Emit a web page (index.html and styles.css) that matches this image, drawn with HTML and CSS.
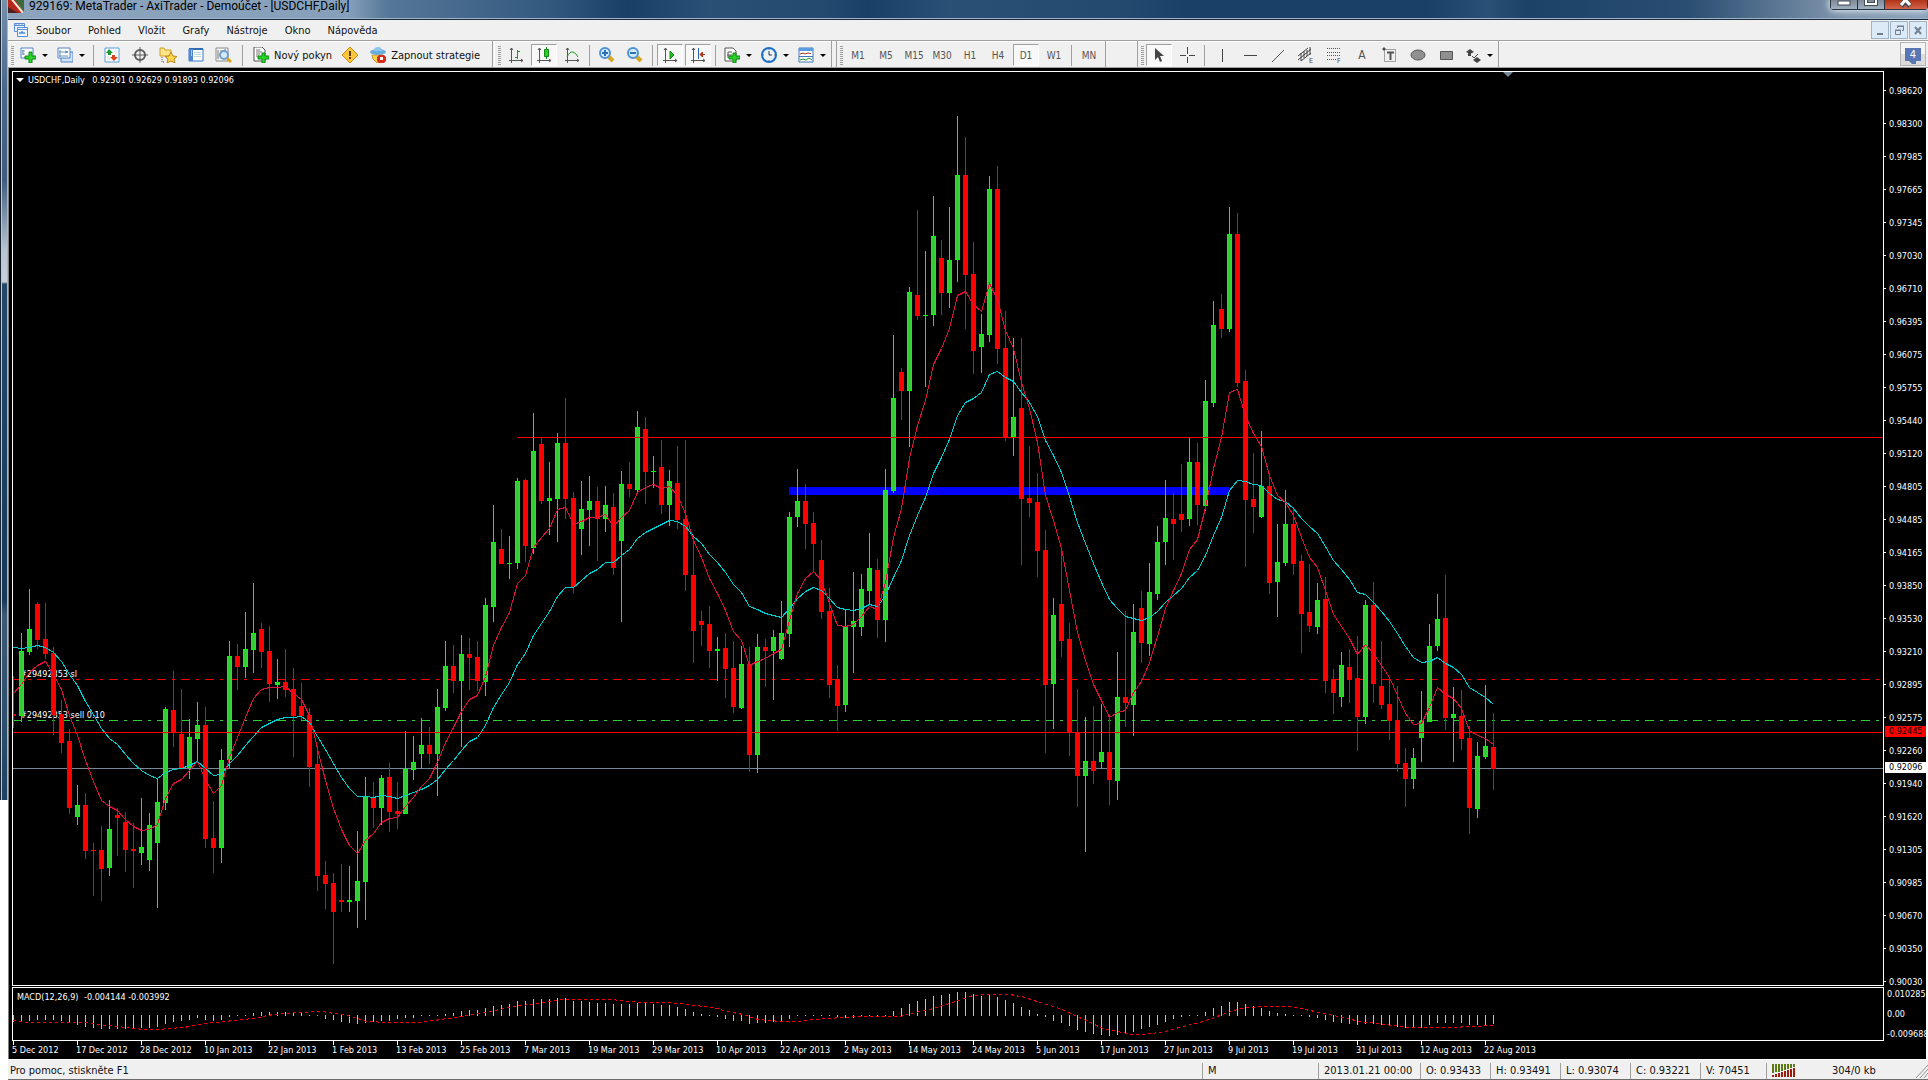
FILE: index.html
```html
<!DOCTYPE html>
<html lang="cs">
<head>
    <meta charset="UTF-8">
    <meta name="viewport" content="width=device-width, initial-scale=1.0">
    <title>929169: MetaTrader - AxiTrader - Demoúčet - [USDCHF,Daily]</title>
    <link rel="stylesheet" href="styles.css">
</head>
<body>
    <div class="frame-left"></div>
    <div class="window">
        <header class="titlebar">
            <svg class="logo" width="16" height="16" viewBox="0 0 16 16"><path d="M0 0h6l10 16H3L0 12z" fill="#b5281c"/><path d="M5 0h11v15z" fill="#3c6b3a"/><path d="M2 0l13 16" stroke="#f4e9d8" stroke-width="2"/><path d="M0 10v6h10z" fill="#4a2020"/></svg>
            <h1>929169: MetaTrader - AxiTrader - Demoúčet - [USDCHF,Daily]</h1>
            <div class="window-buttons">
                <button type="button" aria-label="Minimalizovat"><svg width="26" height="9"><rect x="7" y="1" width="12" height="4" fill="#fff" stroke="#444b55"/></svg></button>
                <button type="button" aria-label="Maximalizovat"><svg width="26" height="9"><path d="M8-4h10v8H8z" fill="none" stroke="#444b55" stroke-width="4"/><path d="M8-4h10v8H8z" fill="none" stroke="#fff" stroke-width="2"/></svg></button>
                <button type="button" class="close" aria-label="Zavřít"><svg width="42" height="9"><path d="M16 6l8-9M25 6l-8-9" stroke="#444b55" stroke-width="5"/><path d="M16 5l8-9M25 5l-8-9" stroke="#fff" stroke-width="3"/></svg></button>
            </div>
        </header>

        <nav class="menu">
            <svg width="16" height="16" viewBox="0 0 16 16" fill="#eef5ff" stroke="#5a90d8"><path d="M1.500 1.500h10v8h-10z"/><path d="M1 3.500h11M3 1v2M6 1v2M9 1v2"/><path d="M4.500 5.500h10v9h-10z"/><path d="M4 7.500h11" /><path d="M6 12l1-2 1 2 1-3 1 3 1-2 1 2" fill="none"/></svg>
            <a href="#">Soubor</a>
            <a href="#">Pohled</a>
            <a href="#">Vložit</a>
            <a href="#">Grafy</a>
            <a href="#">Nástroje</a>
            <a href="#">Okno</a>
            <a href="#">Nápověda</a>
            <div class="mdi-buttons">
                <button type="button" aria-label="Minimalizovat graf"><svg width="12" height="12"><path d="M3 9h6v2H3z" fill="#6f8194"/></svg></button>
                <button type="button" aria-label="Obnovit graf"><svg width="12" height="12" fill="none" stroke="#6f8194"><path d="M4.500 4V2.500h6v4H9M4 2h7M2.500 6.500h5v4h-5zM2 6h6"/></svg></button>
                <button type="button" aria-label="Zavřít graf"><svg width="12" height="12"><path d="M3 3l6 7M9 3l-6 7" stroke="#6f8194" stroke-width="2"/></svg></button>
            </div>
        </nav>

        <div class="toolbar">
            <div class="group group-main">
                <span class="grip"></span>
                <button type="button" class="drop" aria-label="Nový graf"><svg width="16" height="16" viewBox="0 0 16 16"><path d="M1 1h12v10H1z" fill="#fff" stroke="#4d86c6"/><path d="M3 3v5M2 4h3M2 7h3" stroke="#6d8fb5"/><path d="M9 5h3v4h4v3h-4v4H9v-4H5V9h4z" fill="#2bd32b" stroke="#0a8a14"/></svg></button>
                <button type="button" class="drop" aria-label="Profily"><svg width="16" height="16" viewBox="0 0 16 16"><path d="M4 5h12v10H4z" fill="#cfe2f7" stroke="#4d86c6"/><path d="M1 1h12v10H1z" fill="#fff" stroke="#4d86c6"/><path d="M3 3v7M2 5h9M2 9h9M8 4l3 1-3 1" stroke="#6d8fb5" fill="none"/></svg></button>
                <span class="sep"></span>
                <button type="button" aria-label="Sledování trhu"><svg width="16" height="16" viewBox="0 0 16 16"><path d="M1 1h14v14H1z" fill="#fff" stroke="#5a9bdc"/><path d="M5 2l4 4H7v2H4V6H2z" fill="#179a2c"/><path d="M10 14l-4-4h2V8h3v2h3z" fill="#e0401c"/><path d="M10 4h3M11 6h2M3 10h2M3 12h3" stroke="#c9d8e8"/></svg></button>
                <button type="button" aria-label="Datové okno"><svg width="16" height="16" viewBox="0 0 16 16" fill="none" stroke="#5c5c5c"><circle cx="8" cy="8" r="5" stroke-width="2"/><path d="M8 0v16M0 8h16"/></svg></button>
                <button type="button" aria-label="Navigátor"><svg width="18" height="16" viewBox="0 0 18 16"><path d="M1 1h4l1 2h6v6H1z" fill="#ffe48a" stroke="#d2a024"/><path d="M3 10v5h3" fill="none" stroke="#555" stroke-dasharray="1 1"/><path d="M12 5l2 4 4 .5-3 2.500 1 4-4-2-4 2 1-4-3-2.500 4-.5z" fill="#ffd54a" stroke="#b8851b"/></svg></button>
                <button type="button" aria-label="Terminál"><svg width="16" height="16" viewBox="0 0 16 16"><path d="M1 2h14v12H1z" fill="#fff" stroke="#3b7cc4"/><path d="M1 1h14v2H1z" fill="#2e6db4"/><path d="M1 2h4v12H1z" fill="#4d86d6"/><path d="M3 4h1M3 6h1M3 8h1" stroke="#fff"/><path d="M6 5.500h7M6 7.500h7M6 9.500h7" stroke="#c2d6ea"/></svg></button>
                <button type="button" aria-label="Tester strategií"><svg width="18" height="16" viewBox="0 0 18 16"><path d="M1 1h12v13H1z" fill="#f6f6f6" stroke="#8a8a8a"/><path d="M3 3v9M6 3v4M10 2v3" stroke="#777"/><path d="M12 11l4 4" stroke="#d8a520" stroke-width="3"/><circle cx="9" cy="8" r="4" fill="#cfe6fa" fill-opacity=".8" stroke="#6f9fd0" stroke-width="2"/></svg></button>
                <span class="sep"></span>
                <button type="button" class="wide"><svg width="16" height="16" viewBox="0 0 16 16"><path d="M1 0h8l3 3v11H1z" fill="#fff" stroke="#555"/><path d="M3 3h4M3 5h6M3 7h4M3 9h3" stroke="#777"/><path d="M9 6h3v3h4v3h-4v4H9v-4H5V9h4z" fill="#2bd32b" stroke="#0a8a14"/></svg>Nový pokyn</button>
                <button type="button" aria-label="MetaEditor"><svg width="16" height="16" viewBox="0 0 16 16"><path d="M8 0l8 8-8 8-8-8z" fill="#fcc63a" stroke="#c88a10" stroke-linejoin="round"/><path d="M8 4v5M8 10v2" stroke="#5e3c00" stroke-width="2"/></svg></button>
                <button type="button" class="wide"><svg width="16" height="16" viewBox="0 0 16 16"><path d="M2 8h11l-1 6-5 2-4-4z" fill="#f7cf4a" stroke="#c8962a"/><ellipse cx="8" cy="5" rx="8" ry="3" fill="#6aaede"/><path d="M4 4q0-4 4-4t4 4" fill="#8cc6ee"/><path d="M9 8h5l2 2v4l-2 2H9l-2-2v-4z" fill="#d92a1c"/><path d="M10 10h3v3h-3z" fill="#fff"/></svg>Zapnout strategie</button>
            </div>

            <div class="group group-charts">
                <span class="grip"></span>
                <button type="button" aria-label="Sloupcový graf"><svg width="16" height="16" viewBox="0 0 16 16" fill="none" stroke="#555"><path d="M3.500 1v15M1 13.500h14M2 3l1.500-2L5 3M13 12l2 1.500-2 1.500"/><path d="M9.500 3v9M7 10.500h2M10 4.500h2" stroke="#1f9a1f"/></svg></button>
                <button type="button" class="pressed" aria-label="Svíčkový graf"><svg width="16" height="16" viewBox="0 0 16 16" fill="none" stroke="#555"><path d="M3.500 1v15M1 13.500h14M2 3l1.500-2L5 3M13 12l2 1.500-2 1.500"/><path d="M10.500 0v12" stroke="#138a13"/><path d="M8.500 2.500h4v7h-4z" fill="#25d025" stroke="#138a13"/></svg></button>
                <button type="button" aria-label="Čárový graf"><svg width="16" height="16" viewBox="0 0 16 16" fill="none" stroke="#555"><path d="M3.500 1v15M1 13.500h14M2 3l1.500-2L5 3M13 12l2 1.500-2 1.500"/><path d="M3 10q3-6 6-5t5 5" stroke="#1f9a1f"/></svg></button>
                <span class="sep"></span>
                <button type="button" aria-label="Přiblížit"><svg width="16" height="16" viewBox="0 0 16 16"><path d="M10 10l4 4" stroke="#d8a520" stroke-width="4"/><circle cx="6" cy="6" r="5" fill="#d5ecfc" stroke="#4e92d4" stroke-width="2"/><path d="M3 6h6M6 3v6" stroke="#2c6fb4" stroke-width="2"/></svg></button>
                <button type="button" aria-label="Oddálit"><svg width="16" height="16" viewBox="0 0 16 16"><path d="M10 10l4 4" stroke="#d8a520" stroke-width="4"/><circle cx="6" cy="6" r="5" fill="#d5ecfc" stroke="#4e92d4" stroke-width="2"/><path d="M3 6h6" stroke="#2c6fb4" stroke-width="2"/></svg></button>
                <span class="sep"></span>
                <button type="button" class="pressed" aria-label="Automatický posun"><svg width="16" height="16" viewBox="0 0 16 16" fill="none" stroke="#555"><path d="M3.500 1v15M1 13.500h14M2 3l1.500-2L5 3M13 12l2 1.500-2 1.500"/><path d="M8 4l4 4-4 4z" fill="#25c025" stroke="#138a13"/></svg></button>
                <button type="button" class="pressed" aria-label="Odsazení grafu"><svg width="16" height="16" viewBox="0 0 16 16" fill="none" stroke="#555"><path d="M3.500 1v15M1 13.500h14M2 3l1.500-2L5 3M13 12l2 1.500-2 1.500"/><path d="M8.500 1v11" stroke="#2864b0"/><path d="M10 7.500h5M12.500 5L10 7.500l2.500 2.500z" stroke="#b83010" fill="#b83010"/></svg></button>
                <span class="sep"></span>
                <button type="button" class="drop" aria-label="Indikátory"><svg width="16" height="16" viewBox="0 0 16 16"><path d="M1 1h8l3 3v10H1z" fill="#fff" stroke="#555"/><path d="M4 11V5h4M3 8h5" stroke="#555" fill="none"/><path d="M9 6h3v3h4v3h-4v4H9v-4H5V9h4z" fill="#2bd32b" stroke="#0a8a14"/></svg></button>
                <button type="button" class="drop" aria-label="Periody"><svg width="16" height="16" viewBox="0 0 16 16"><circle cx="8" cy="8" r="7" fill="#eaf3fc" stroke="#1f6fc4" stroke-width="2"/><path d="M8 4v4h3" fill="none" stroke="#333"/><path d="M8 2v1M8 13v1M2 8h1M13 8h1" stroke="#667"/></svg></button>
                <button type="button" class="drop" aria-label="Šablony"><svg width="16" height="16" viewBox="0 0 16 16"><path d="M1 1h14v14H1z" fill="#fff" stroke="#3d78bd"/><path d="M1 1h14v3H1z" fill="#5b9be0"/><path d="M1 9.500h14" stroke="#3d78bd"/><path d="M2 7l3-1 2 1 3-1 3 .5" stroke="#a83018" fill="none"/><path d="M2 13l3-1 3 1 3-2 3 2" stroke="#1f9a1f" fill="none"/></svg></button>
            </div>

            <div class="group group-periods">
                <span class="grip"></span>
                <button type="button">M1</button>
                <button type="button">M5</button>
                <button type="button">M15</button>
                <button type="button">M30</button>
                <button type="button">H1</button>
                <button type="button">H4</button>
                <button type="button" class="pressed">D1</button>
                <button type="button">W1</button>
                <span class="sep"></span>
                <button type="button">MN</button>
            </div>

            <div class="group group-draw">
                <span class="grip"></span>
                <button type="button" class="pressed" aria-label="Kurzor"><svg width="16" height="16"><path d="M4 1v12l3-3 2 5 2-1-2-5h4z" fill="#444"/></svg></button>
                <button type="button" aria-label="Nitkový kříž"><svg width="16" height="16"><path d="M8.500 0v7M8.500 10v6M1 8.500h6M10 8.500h6" stroke="#444"/></svg></button>
                <span class="sep"></span>
                <button type="button" aria-label="Svislá čára"><svg width="16" height="16"><path d="M8.500 2v13" stroke="#444"/></svg></button>
                <button type="button" aria-label="Vodorovná čára"><svg width="16" height="16"><path d="M2 8.500h13" stroke="#444"/></svg></button>
                <button type="button" aria-label="Trendová čára"><svg width="16" height="16"><path d="M2 15L14 3" stroke="#555"/></svg></button>
                <button type="button" aria-label="Kanál"><svg width="16" height="17" fill="none" stroke="#444"><path d="M0 9l10-8M0 13L13 2M3 14l10-8M3 6v8M6 4v7M9 3v6M12 0v8"/><text x="11" y="16">E</text></svg></button>
                <button type="button" aria-label="Fibonacci"><svg width="16" height="17" fill="none" stroke="#555"><path d="M1 1.500h14M1 5.500h14M1 8.500h14M1 12.500h9" stroke-dasharray="1 1"/><text x="11" y="16">F</text></svg></button>
                <button type="button" class="letter">A</button>
                <button type="button" aria-label="Popisek"><svg width="16" height="16" fill="none" stroke="#555"><path d="M2.500 2.500h11v12h-11z" stroke-dasharray="1 1"/><path d="M5 5.500h7M8.500 5v8" stroke-width="2"/><path d="M1 1h2v2H1z" fill="#444"/></svg></button>
                <button type="button" aria-label="Elipsa"><svg width="16" height="16"><ellipse cx="8" cy="8" rx="7" ry="5" fill="#909090" stroke="#555"/></svg></button>
                <button type="button" aria-label="Obdélník"><svg width="16" height="16"><path d="M2.500 4.500h12v8h-12z" fill="#909090" stroke="#555"/></svg></button>
                <button type="button" class="drop" aria-label="Šipky"><svg width="16" height="16" fill="#444"><path d="M5 2l4 3-4 2-4-2zM3 6h3v3H3zM12 10l4 3-4 3-4-3z"/><path d="M7 9l2 2 4-4" fill="none" stroke="#444"/></svg></button>
            </div>

            <button type="button" class="chat" aria-label="Zprávy: 4"><span>4</span></button>
        </div>

        <main class="chart">
            <section class="pane price-pane">
                <svg id="price-plot" class="plot"></svg>
                <p class="pane-label"><i class="triangle"></i>USDCHF,Daily <span>0.92301 0.92629 0.91893 0.92096</span></p>
                <i class="triangle shift-mark"></i>
            </section>
            <div class="scale price-scale" id="price-scale">
                <b class="tag tag-ask">0.92445</b>
                <b class="tag tag-bid">0.92096</b>
            </div>
            <section class="pane macd-pane">
                <svg id="macd-plot" class="plot"></svg>
                <p class="pane-label">MACD(12,26,9) <span>-0.004144 -0.003992</span></p>
            </section>
            <div class="scale macd-scale"><span>0.010285</span><span>0.00</span><span>-0.009688</span></div>
            <div class="dates" id="dates"></div>
        </main>

        <footer class="status">
            <span class="help">Pro pomoc, stiskněte F1</span>
            <span class="cell profile">M</span>
            <span class="cell time">2013.01.21 00:00</span>
            <span class="cell">O: 0.93433</span>
            <span class="cell">H: 0.93491</span>
            <span class="cell">L: 0.93074</span>
            <span class="cell">C: 0.93221</span>
            <span class="cell volume">V: 70451</span>
            <span class="cell traffic">
                <svg width="24" height="13"><path d="M1 0v9M4 0v8M7 0v8M10 0v7M13 0v6M16 0v5M19 0v4M22 0v3" stroke="#5c7a14" stroke-width="2"/><path d="M1 11v2M4 10v3M7 9v4M10 8v5M13 7v6M16 6v7M19 5v8M22 4v9" stroke="#9c1c10" stroke-width="2"/></svg>
                304/0 kb
            </span>
            <svg class="resize" width="12" height="14"><path d="M0 14L12 1M4 14l8-9M8 14l4-5" stroke="#909090" stroke-width="1"/></svg>
        </footer>
    </div>
    <script src="chart.js"></script>
</body>
</html>
```
FILE: styles.css
```css
* {
    box-sizing: border-box;
}
body {
    margin: 0;
    min-height: 100vh;
    display: flex;
    background-color: #fff;
    color: #111;
    font-family: "DejaVu Sans Condensed", "Noto Sans", sans-serif;
    font-size: 11px;
    overflow: hidden;
}
button {
    font: inherit;
    color: inherit;
    background: none;
    border: 0;
    margin: 0;
    padding: 0;
    cursor: pointer;
}
svg {
    display: block;
    flex: none;
}

/* okno */
.frame-left {
    flex: 0 0 8px;
    height: 800px;
    border-left: 1px solid #1b2634;
    border-right: 1px solid #a9b8c6;
    box-shadow: inset 1px 0 #b9c9d8;
    background: linear-gradient(#7590ad 0, #48688c 90px, #3e5d80 180px, #b9c5d3 250px, #c8d0da 282px, #24486a 284px, #1d4468 400px, #16395a 600px, #3c5a74 615px, #2c506e 720px, #1d4164 800px);
}
.window {
    flex: 1;
    min-width: 0;
    height: 100vh;
    display: flex;
    flex-direction: column;
    border-bottom: 1px solid #6c6c6c;
}
.titlebar {
    flex: 0 0 20px;
    display: flex;
    align-items: flex-start;
    border-bottom: 1px solid #1c2a3c;
    box-shadow: inset 0 -1px #9db4c8;
    background: linear-gradient(90deg, #8ca4bd 0, #86a0bb 340px, #557799 380px, #34597f 540px, #1a3f66 620px, #2a5076 700px, #24496f 820px, #1a3f66 860px, #2a5076 940px, #24496f 1120px, #1a4068 1180px, #1a4068 1420px, #2a5076 1480px, #1c4268 1520px, #2a4d72 1680px, #8298ae 1840px, #8ba2b8 100%);
}
.titlebar .logo {
    margin-top: -3px;
}
.titlebar h1 {
    flex: 1;
    margin: -3px 0 0 5px;
    font: 12px/18px Roboto, "Noto Sans", sans-serif;
    color: #000;
}
.window-buttons {
    display: flex;
    border: 1px solid #2a3340;
    border-top: 0;
    border-radius: 0 0 4px 4px;
    box-shadow: 0 0 6px 1px #e4ecf4;
}
.window-buttons button {
    height: 9px;
    overflow: hidden;
    border-right: 1px solid #2a3340;
    background: linear-gradient(#7d8a98, #9fb0c0);
}
.window-buttons .close {
    background: linear-gradient(#b03418, #d4644c);
    border-right: 0;
}
.menu {
    flex: 0 0 20px;
    display: flex;
    align-items: center;
    gap: 17px;
    padding-left: 5px;
    background-color: #f0f0f0;
}
.menu svg {
    margin-right: -10px;
}
.menu a {
    color: #111;
    text-decoration: none;
}
.mdi-buttons {
    display: flex;
    gap: 1px;
    margin: 0 1px 0 auto;
}
.mdi-buttons button {
    width: 18px;
    height: 18px;
    padding: 2px;
    border: 1px solid #9fb2c6;
    background-color: #dce9f6;
}
.mdi-buttons svg {
    margin: 0;
}

/* nástrojová lišta */
.toolbar {
    flex: 0 0 28px;
    display: flex;
    background-color: #f0f0f0;
    border-top: 1px solid #a0a0a0;
    border-bottom: 1px solid #a0a0a0;
    box-shadow: inset 0 1px #fff;
}
.group {
    flex: none;
    display: flex;
    align-items: center;
    padding-top: 2px;
    border-right: 1px solid #a0a0a0;
}
.group-main {
    width: 485px;
}
.group-charts {
    width: 338px;
    border-left: 1px solid #fff;
    margin-left: 1px;
}
.group-periods {
    width: 270px;
    margin-left: 4px;
    border-left: 1px solid #a0a0a0;
    color: #555;
    font-size: 10px;
}
.group-draw {
    width: 362px;
    margin-left: 31px;
    border-left: 1px solid #a0a0a0;
}
.grip {
    width: 3px;
    height: 19px;
    margin: 0 1px 0 3px;
    background: repeating-linear-gradient(#a0a0a0 0 1px, #f0f0f0 1px 2px);
}
.sep {
    width: 1px;
    height: 21px;
    margin: 0 3px;
    background-color: #a0a0a0;
}
.group-main .sep {
    margin: 0 4px;
}
.group button {
    flex: 0 0 28px;
    height: 22px;
    display: flex;
    align-items: center;
    justify-content: center;
}
.group .drop {
    flex-basis: 37px;
    justify-content: flex-start;
    gap: 6px;
    padding-left: 5px;
}
.drop::after {
    content: "";
    border: 3px solid transparent;
    border-top-color: #000;
    border-bottom: 0;
}
.group .wide {
    flex-basis: auto;
    gap: 5px;
    padding: 0 4px 0 6px;
    white-space: nowrap;
}
.group .pressed {
    flex-basis: 26px;
    margin: 0 1px;
    border: 1px solid #fff;
    border-top-color: #a0a0a0;
    border-left-color: #a0a0a0;
    background-color: #f8f8f8;
}
.group .letter {
    font-size: 12px;
    color: #555;
}
.group text {
    font-size: 7px;
    fill: #444;
    stroke: none;
}
.chat {
    width: 26px;
    height: 24px;
    margin: 1px 2px 0 auto;
    padding: 3px 4px;
    border: 1px solid #b4b4b4;
    background: linear-gradient(#f4f4f4 50%, #dcdcdc 50%);
}
.chat span {
    display: block;
    height: 13px;
    background-color: #5877b4;
    color: #fff;
    font-size: 11px;
    line-height: 13px;
}
.chat span::after {
    content: "";
    display: block;
    width: 4px;
    margin-left: 4px;
    border-top: 3px solid #5877b4;
    border-left: 3px solid transparent;
}

/* graf */
.chart {
    flex: 1;
    min-height: 0;
    display: grid;
    grid-template-columns: 1fr 42px;
    grid-template-rows: minmax(0, 1fr) 54px 17px;
    row-gap: 1px;
    margin-right: 2px;
    padding: 3px 0 0 3px;
    border-left: 1px solid #808080;
    background-color: #000;
    color: #fff;
    font-size: 9px;
    line-height: 12px;
}
.pane {
    position: relative;
    min-height: 0;
    overflow: hidden;
    border: 1px solid #fff;
}
.plot {
    width: 100%;
    height: 100%;
    shape-rendering: crispEdges;
}
.plot text {
    font-size: 9px;
    fill: #fff;
}
.pane-label {
    position: absolute;
    top: 2px;
    left: 3px;
    margin: 0;
}
.pane-label span {
    margin-left: 5px;
}
.macd-pane .pane-label {
    top: 3px;
    left: 4px;
}
.macd-pane .pane-label span {
    margin-left: 3px;
}
.triangle {
    display: inline-block;
    border: 4px solid transparent;
    border-top-color: #fff;
    border-bottom: 0;
    margin-right: 4px;
    vertical-align: 1px;
}
.shift-mark {
    position: absolute;
    top: 0;
    left: 1490px;
    border-width: 5px;
    border-bottom: 0;
    border-top-color: #778899;
}
.scale {
    position: relative;
    min-height: 0;
}
.price-scale {
    padding-top: 3px;
}
.price-scale span {
    display: flex;
    align-items: center;
    gap: 3px;
    height: 33px;
}
.price-scale span::before {
    content: "";
    width: 2px;
    height: 1px;
    background-color: #fff;
}
.tag {
    position: absolute;
    left: 1px;
    right: 0;
    padding-left: 4px;
    font-weight: normal;
    line-height: 11px;
    color: #000;
}
.tag-ask {
    top: 655px;
    background-color: #f00;
}
.tag-bid {
    top: 691px;
    background-color: #fff;
}
.macd-scale {
    display: flex;
    flex-direction: column;
    justify-content: space-between;
    padding: 1px 0 1px 3px;
}
.dates {
    grid-column: 1 / 3;
    display: flex;
    margin-top: -1px;
}
.dates span {
    flex: 0 0 64px;
    padding-top: 3px;
    background: linear-gradient(#fff, #fff) 1px 0 / 1px 4px no-repeat;
    white-space: nowrap;
}

/* stavový řádek */
.status {
    flex: 0 0 20px;
    display: flex;
    align-items: center;
    padding-top: 2px;
    border-top: 1px solid #fff;
    background-color: #f0f0f0;
}
.help {
    flex: 1;
    padding-left: 2px;
}
.cell {
    flex: 0 0 70px;
    height: 16px;
    padding-left: 5px;
    line-height: 16px;
    border-left: 1px solid #a0a0a0;
    white-space: nowrap;
}
.profile {
    flex-basis: 116px;
}
.time {
    flex-basis: 102px;
}
.volume {
    flex-basis: 66px;
}
.traffic {
    flex-basis: 150px;
    display: flex;
    align-items: center;
    gap: 36px;
}
```
FILE: chart.js
```js
const STEP = 8;
const PRICE_TOP = 72;
const MACD_TOP = 988;

// barva, high, tělo nahoře, tělo dole, low
const candles = `
r676,714,716,728 g633,651,716,722 g589,629,652,655 r602,604,640,649 r603,639,654,659 r647,653,715,735 r700,714,743,753 r729,741,808,814
g785,805,817,825 r793,805,851,859 r843,850,851,896 r826,850,869,901 g800,829,868,876 r808,815,818,856 r812,822,850,872 r823,849,851,888
g798,847,853,865 g813,825,860,871 g778,802,843,908 g707,709,803,810 r671,710,732,747 r689,734,768,768 g719,737,768,779 g702,725,739,761
r707,725,839,848 r801,838,848,873 g749,760,848,863 g641,656,760,768 r644,656,667,690 g612,649,667,678 g583,633,650,673 r623,629,652,668
r626,651,684,702 g659,682,685,699 r649,682,690,697 r668,689,716,757 r683,706,716,720 r708,715,767,787 r750,764,876,891 r861,875,884,909
r873,883,912,964 r864,900,902,912 g866,900,902,912 g831,881,901,928 g777,796,882,920 r782,797,808,828 g775,778,808,825 r763,777,812,832
r782,811,814,829 g731,769,814,814 g736,762,770,780 g718,745,754,769 r727,745,754,764 g689,707,754,796 g641,666,708,711 r645,666,681,693
g635,654,681,747 r638,654,658,690 r641,657,681,691 g598,605,682,696 g505,542,607,622 r529,549,564,564 g536,563,564,579 g478,481,563,569
r479,480,546,562 g413,451,548,554 r437,444,501,504 g462,498,501,535 g433,443,499,542 r398,443,499,519 r492,498,587,593 g481,509,529,555
g476,501,510,546 r487,501,519,561 g486,505,519,532 r493,507,568,575 g471,484,541,622 r462,484,489,497 g411,427,490,492 r417,429,472,504
g456,471,472,488 r440,467,505,514 g470,481,505,526 r446,483,520,529 r440,519,575,591 r535,575,631,663 r611,621,625,646 r606,624,651,668
g637,649,651,681 r633,648,669,698 r641,668,707,713 g646,664,708,709 r647,664,755,772 g634,647,755,773 r639,647,651,687 g630,637,651,700
g601,633,659,660 g512,517,634,647 g469,501,517,527 r484,501,524,549 r512,523,544,571 r540,560,612,619 r588,611,685,698 r665,679,706,731
g610,626,705,712 g572,621,627,673 g574,589,627,636 g533,568,591,605 r559,570,620,638 g469,490,620,642 g335,398,491,493 r368,372,391,420
g287,292,391,447 r210,295,316,320 g251,315,316,387 g196,236,315,326 r240,258,293,315 g207,260,293,308 g116,175,260,282 r137,175,275,329
r242,274,351,374 g314,334,347,373 g176,189,335,342 r166,189,349,364 r311,348,437,441 g338,417,437,456 r338,408,499,565 r446,498,503,517
r473,502,551,577 r530,550,685,753 g598,615,684,729 r551,604,641,657 r623,639,733,756 r689,732,776,807 g717,761,776,852 r706,761,771,784
g704,752,762,769 r714,752,780,805 g652,697,781,800 r611,697,703,727 g604,632,705,736 r591,608,643,663 g563,592,644,656 g526,542,594,600
g480,518,542,565 r493,519,524,560 r464,514,520,532 g438,462,519,526 r443,462,505,525 g380,401,506,511 g301,325,403,407 r294,309,329,338
g207,234,329,332 r213,234,383,387 r370,381,500,567 r453,499,507,533 g431,486,517,518 r473,486,583,594 g524,562,582,617 g490,524,563,566
r507,524,564,575 r555,561,614,653 r564,612,626,632 g583,600,627,634 r577,599,681,693 r669,679,693,714 g652,665,697,707 r649,667,680,703
r636,678,717,751 g600,605,717,724 r582,605,684,703 r641,686,705,709 r679,704,721,740 r686,720,764,772 r748,763,779,807 g748,758,779,789
g691,721,738,762 g624,646,722,722 g594,619,646,651 r575,618,718,730 g687,714,718,762 r690,716,739,750 r726,738,808,834 g742,756,809,818
g685,746,757,759 r713,747,769,790`.trim().split(/\s+/);

const fastMa = [
    693,684,672,665,661,674,689,715,735,760,781,800,806,810,819,826,830,829,824,798,783,779,770,761,779,793,785,757,737,717,
    698,689,687,687,686,693,699,715,748,780,808,829,845,853,840,833,822,818,817,806,797,786,778,762,742,727,711,699,695,676,
    645,627,612,583,575,547,537,528,509,507,524,521,517,517,514,526,517,510,492,487,484,488,486,495,513,540,557,578,593,610,
    631,640,665,661,658,653,649,620,593,578,571,580,603,625,626,624,616,606,609,582,537,508,458,425,400,364,348,328,295,291,
    304,311,283,299,330,348,382,408,442,495,520,548,590,632,660,684,700,717,712,710,692,681,662,636,608,590,573,549,539,507,
    468,437,392,389,415,433,446,475,495,502,515,537,557,567,590,614,626,638,654,644,653,665,677,695,713,724,723,707,687,694,
    698,708,730,735,738,744
];

const slowMa = [
    647,648,647,645,647,652,661,674,685,701,714,728,738,744,754,763,770,775,778,772,769,768,765,761,768,775,774,763,755,745,
    736,727,723,719,717,717,716,722,736,749,763,777,788,796,796,797,795,796,798,795,792,789,785,779,769,760,750,741,737,725,
    707,694,682,664,653,635,623,611,596,587,587,580,573,569,562,562,555,549,538,532,528,524,520,521,526,536,543,554,562,572,
    584,592,606,609,613,615,617,608,598,591,587,590,598,607,609,610,608,604,606,595,577,560,535,515,497,473,457,439,415,402,
    398,392,374,371,377,381,392,402,416,440,455,472,496,522,543,563,582,599,608,616,618,620,617,611,602,595,588,577,570,555,
    535,517,490,480,481,484,485,493,499,501,508,518,526,533,546,560,569,579,592,594,602,611,621,633,646,657,662,661,657,663,
    667,674,687,692,697,704
];

const macd = [
    -7,-6,-6,-5,-5,-5,-6,-7,-10,-12,-13,-14,-14,-14,-14,-13,-13,-13,-12,-9,-7,-6,-5,-3,-5,-6,-5,-2,0,1,
    3,4,4,4,4,4,3,1,-1,-4,-5,-7,-8,-9,-8,-7,-6,-6,-4,-3,-3,-1,0,0,2,3,5,6,6,8,
    10,11,12,15,15,17,17,17,18,18,15,15,14,13,13,12,12,12,13,13,12,11,11,9,7,4,2,0,-2,-4,
    -6,-6,-9,-8,-8,-7,-6,-4,0,0,1,0,-1,-2,-3,-3,0,0,0,0,5,8,12,15,17,20,21,22,24,24,
    22,20,22,19,16,13,9,6,2,-2,-6,-8,-11,-15,-17,-19,-20,-21,-20,-19,-17,-14,-12,-10,-7,-4,-2,0,1,4,
    8,10,14,14,12,10,8,5,3,2,0,0,-2,-3,-5,-7,-8,-9,-10,-9,-9,-10,-11,-12,-13,-13,-13,-10,-8,-8,
    -8,-8,-10,-10,-10,-9
];

const signal = [
    [0,1020],[15,1022],[73,1022],[85,1024],[105,1026],[130,1029],[147,1029],[155,1028],[171,1027],[191,1023],[211,1021],
    [240,1018],[260,1014],[285,1012],[309,1011],[334,1015],[354,1021],[375,1022],[407,1022],[428,1019],[448,1016],[477,1011],
    [501,1006],[526,1003],[550,999],[599,999],[615,1001],[632,1002],[650,1002],[668,1003],[683,1005],[700,1007],[715,1011],
    [730,1014],[745,1019],[767,1021],[784,1021],[800,1019],[830,1017],[847,1016],[887,1016],[899,1013],[920,1008],[940,1002],
    [960,995],[977,994],[997,994],[1012,997],[1027,1002],[1047,1008],[1060,1014],[1077,1022],[1090,1028],[1104,1031],
    [1120,1034],[1132,1034],[1152,1031],[1170,1026],[1187,1022],[1207,1015],[1227,1008],[1247,1006],[1277,1006],[1302,1011],
    [1325,1016],[1347,1021],[1372,1024],[1397,1027],[1440,1027],[1457,1026],[1480,1025]
];

function hline(y, color, extra) {
    const py = y - PRICE_TOP + 0.5;
    return `<line x1="0" x2="100%" y1="${py}" y2="${py}" stroke="${color}" ${extra || ""}/>`;
}

function average(values, color) {
    const points = values.map((y, i) => `${i * STEP + 0.5},${y - PRICE_TOP + 0.5}`).join(" ");
    return `<polyline points="${points}" fill="none" stroke="${color}"/>`;
}

function drawPrice() {
    let out = hline(768, "#778899");
    out += hline(679, "#ff0000", 'stroke-dasharray="9 6 3 6"');
    out += hline(720, "#32cd32", 'stroke-dasharray="9 6 3 6"');
    out += `<text x="7" y="605">#29492853 sl</text><text x="7" y="646">#29492853 sell 0.10</text>`;
    out += `<rect x="776" y="415" width="440" height="8" fill="#0000ff"/>`;
    candles.forEach((candle, i) => {
        const up = candle[0] === "g";
        const [high, top, bottom, low] = candle.slice(1).split(",").map(v => v - PRICE_TOP);
        const x = i * STEP;
        const color = up ? "#00ff00" : "#ff0000";
        out += `<rect x="${x}" y="${high}" width="1" height="${low - high}" fill="${color}"/>`;
        out += `<rect x="${x - 2}" y="${top}" width="5" height="${bottom - top}" fill="${color}"/>`;
        if (up && bottom - top > 2) {
            out += `<rect x="${x - 1}" y="${top + 1}" width="3" height="${bottom - top - 2}" fill="#32cd32"/>`;
        }
    });
    out += average(slowMa, "#00ced1") + average(fastMa, "#dc143c");
    out += `<line x1="504" x2="100%" y1="365.5" y2="365.5" stroke="#ff0000"/>`;
    out += hline(732, "#ff0000");
    document.getElementById("price-plot").innerHTML = out;
}

function drawMacd() {
    const zero = 1015 - MACD_TOP;
    let out = "";
    macd.forEach((value, i) => {
        const y = value > 0 ? zero + 1 - value : zero;
        out += `<rect x="${i * STEP}" y="${y}" width="1" height="${Math.max(1, Math.abs(value))}" fill="#c0c0c0"/>`;
    });
    const points = signal.map(p => `${p[0]},${p[1] - MACD_TOP + 0.5}`).join(" ");
    out += `<polyline points="${points}" fill="none" stroke="#ff0000" stroke-dasharray="3 3"/>`;
    document.getElementById("macd-plot").innerHTML = out;
}

function drawScales() {
    const prices = ["0.98620", "0.98300", "0.97985", "0.97665", "0.97345", "0.97030", "0.96710", "0.96395", "0.96075", "0.95755",
        "0.95440", "0.95120", "0.94805", "0.94485", "0.94165", "0.93850", "0.93530", "0.93210", "0.92895", "0.92575",
        "0.92260", "0.91940", "0.91620", "0.91305", "0.90985", "0.90670", "0.90350", "0.90030"];
    const days = ["5 Dec 2012", "17 Dec 2012", "28 Dec 2012", "10 Jan 2013", "22 Jan 2013", "1 Feb 2013", "13 Feb 2013", "25 Feb 2013",
        "7 Mar 2013", "19 Mar 2013", "29 Mar 2013", "10 Apr 2013", "22 Apr 2013", "2 May 2013", "14 May 2013", "24 May 2013",
        "5 Jun 2013", "17 Jun 2013", "27 Jun 2013", "9 Jul 2013", "19 Jul 2013", "31 Jul 2013", "12 Aug 2013", "22 Aug 2013"];
    document.getElementById("price-scale").insertAdjacentHTML("afterbegin", prices.map(p => `<span>${p}</span>`).join(""));
    document.getElementById("dates").innerHTML = days.map(d => `<span>${d}</span>`).join("");
}

drawPrice();
drawMacd();
drawScales();
```
